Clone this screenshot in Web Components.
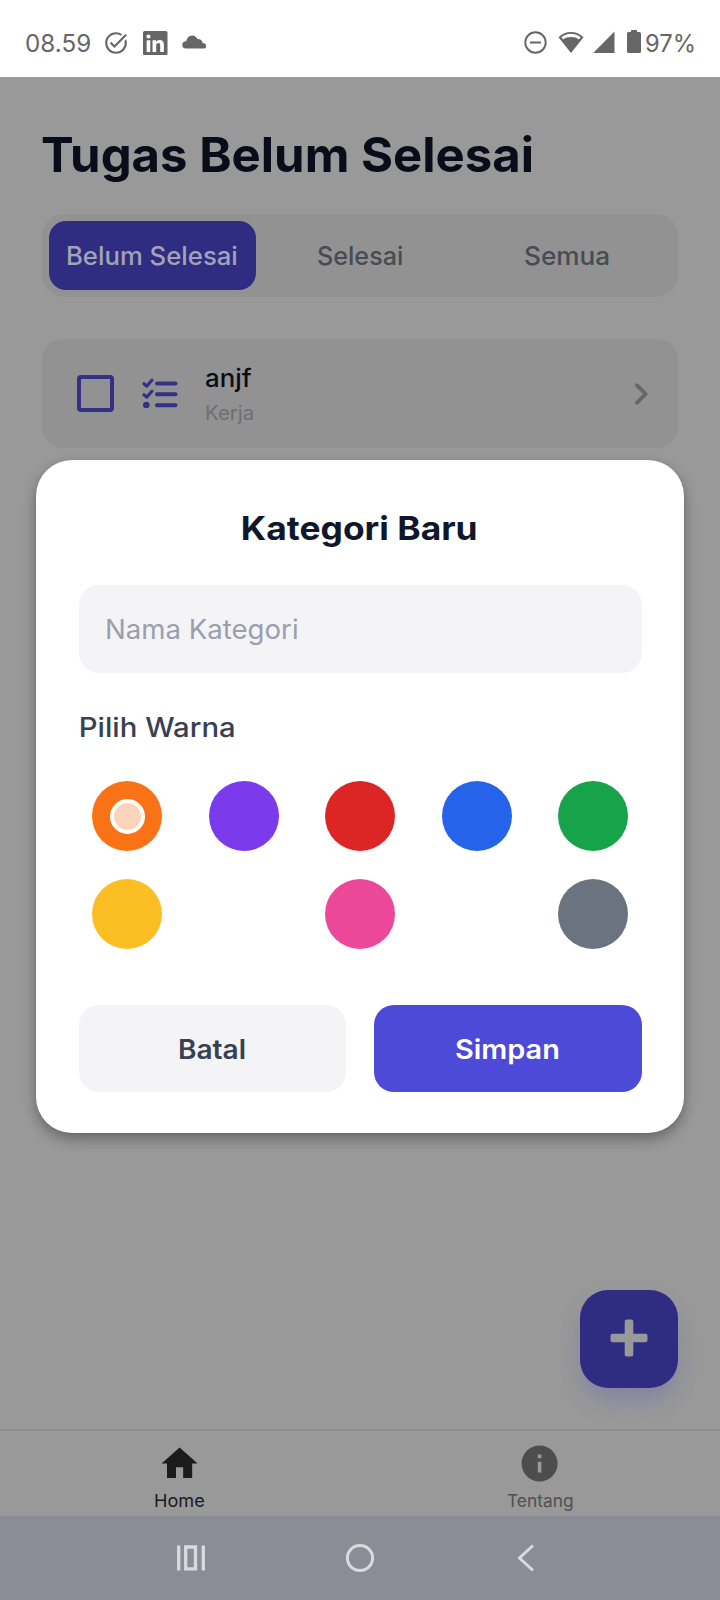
<!DOCTYPE html>
<html lang="id">
<head>
<meta charset="utf-8">
<title>Tugas Belum Selesai</title>
<style>
body{margin:0;background:#999;font-family:Inter,"Liberation Sans",sans-serif;overflow:hidden}
</style>
</head>
<body>
<todo-app></todo-app>
<script>
const define=(name,html,base=HTMLElement)=>{
  const t=document.createElement('template');t.innerHTML=html;
  customElements.define(name,class extends base{
    constructor(){super();this.attachShadow({mode:'open'}).appendChild(t.content.cloneNode(true));}
  });
};

/* One line of text whose glyphs span exactly the width given by "w". */
customElements.define('fit-text',class extends HTMLElement{
  connectedCallback(){
    if(this.shadowRoot)return;
    const size=this.getAttribute('size'),weight=this.getAttribute('weight')||400,w=+this.getAttribute('w');
    const c=document.createElement('canvas').getContext('2d');
    c.font=`${weight} ${size}px Inter, "Liberation Sans", sans-serif`;
    const m=c.measureText(this.textContent.trim());
    const ink=m.actualBoundingBoxRight+m.actualBoundingBoxLeft;
    this.attachShadow({mode:'open'}).innerHTML=`<style>
      :host{display:block;flex:none;width:${w}px;height:${size*1.2}px;line-height:${size*1.2}px;font-size:${size}px;font-weight:${weight};white-space:nowrap}
      span{display:inline-block;transform-origin:0 50%;transform:scaleX(${w/ink}) translateX(${m.actualBoundingBoxLeft}px)}
    </style><span><slot></slot></span>`;
  }
});

define('status-bar',`<style>
:host{display:flex;box-sizing:border-box;height:77px;background:#fff;color:#666;padding:9px 26px 0;align-items:center;justify-content:space-between}
div{display:flex;align-items:center}
svg{display:block;fill:#666;flex:none}
fit-text{margin-top:2px}
</style>
<div>
<fit-text size="24.5" w="64">08.59</fit-text>
<svg style="margin-left:13px" width="26" height="26" viewBox="0 0 24 24"><path d="M22 5.18 10.59 16.6l-4.24-4.24 1.41-1.41 2.83 2.83 10-10L22 5.18zM19.79 10.22c.13.57.21 1.17.21 1.78 0 4.42-3.58 8-8 8s-8-3.58-8-8 3.58-8 8-8c1.58 0 3.04.46 4.28 1.25l1.44-1.44C16.1 2.67 14.13 2 12 2 6.48 2 2 6.48 2 12s4.48 10 10 10 10-4.48 10-10c0-1.19-.22-2.33-.6-3.39l-1.61 1.61z"/></svg>
<svg style="margin-left:14px" width="24.5" height="24.5" viewBox="0 0 24 24"><path d="M20.45 20.45h-3.56v-5.57c0-1.33-.02-3.04-1.85-3.04-1.85 0-2.14 1.45-2.14 2.94v5.67H9.35V9h3.41v1.56h.05c.48-.9 1.64-1.85 3.37-1.85 3.6 0 4.27 2.37 4.27 5.46v6.28zM5.34 7.43a2.06 2.06 0 1 1 0-4.12 2.06 2.06 0 0 1 0 4.12zm1.78 13.02H3.56V9h3.56v11.45zM22.22 0H1.77C.79 0 0 .77 0 1.73v20.54C0 23.23.79 24 1.77 24h20.45c.98 0 1.78-.77 1.78-1.73V1.73C24 .77 23.2 0 22.22 0z"/></svg>
<svg style="margin:-1px 0 0 14px" width="24.5" height="14" viewBox="0 0 24 14"><path d="M3.800 13.500Q0 13.200 0 9.900C0 7.500 1.700 6.300 3.900 6.200 4.800 2.700 6.800.4 9.800.4c2.700 0 4.600 1.600 5.400 3.700 2.900-.1 4.700 1.500 5.200 3.900C22.700 8.200 24 9.400 24 11c0 1.600-1 2.500-2.600 2.500z"/></svg>
</div>
<div>
<svg width="23" height="23" viewBox="0 0 23 23"><circle cx="11.500" cy="11.500" r="10.200" fill="none" stroke="#666" stroke-width="1.900"/><path d="M6 10.500h11v2H6z"/></svg>
<svg style="margin-left:11px" width="26" height="23" viewBox="0 0 26 23"><path d="M13 22 0.500 6.200C4 2.700 8.300.900 13 .900S22 2.700 25.500 6.200zM13 2.700C9.500 2.700 6 3.900 3.400 6.200l1.700 2.200C7.400 6.600 10 5.900 13 5.900s5.600.700 7.900 2.500l1.700-2.200C20 3.900 16.500 2.700 13 2.700z" fill-rule="evenodd"/></svg>
<svg style="margin-left:8.500px" width="22" height="23" viewBox="0 0 22 23"><path d="M.200 22 21.500.500V22z"/></svg>
<svg style="margin-left:12.500px;margin-top:-1px" width="14" height="24" viewBox="0 0 14 24"><path d="M4 0h6v2h2.500Q14 2 14 3.500v18Q14 23 12.500 23h-11Q0 23 0 21.500v-18Q0 2 1.500 2H4z"/></svg>
<fit-text style="margin-left:5px" size="24.5" w="48">97%</fit-text>
</div>`);

define('filter-tab',`<style>
:host{display:flex;align-items:center;justify-content:center;border-radius:17px;color:#484b52}
:host([active]){background:#2e2d82;color:#a3a2b6}
</style><slot></slot>`);

define('filter-tabs',`<style>
:host{display:grid;grid-template-columns:207px 207px 208px;box-sizing:border-box;height:83px;padding:7px;border-radius:22px;background:#929292}
</style><slot></slot>`);

define('task-card',`<style>
:host{display:flex;align-items:center;box-sizing:border-box;height:109px;margin-top:42px;padding:0 30px 0 35px;border-radius:21px;background:#929292}
svg{display:block;flex:none}
.box{box-sizing:border-box;width:37px;height:37px;border:4px solid #343087;border-radius:4px}
.list{margin:-2px 0 0 28px}
.copy{margin-left:28px;flex:1}
</style>
<div class="box"></div>
<svg class="list" width="36" height="30" viewBox="0 0 36 30" fill="none" stroke="#343087" stroke-linecap="round" stroke-linejoin="round"><path d="m2 5.700 2.700 2.400L9.900 2.200M2 16.700l2.700 2.400L9.900 13.200" stroke-width="3.200"/><path d="M15 5.500h18.500M15 16.300h18.500M15 27.200h18.500" stroke-width="4"/><circle cx="4.300" cy="27" r="3.300" fill="#343087" stroke="none"/></svg>
<div class="copy"><slot></slot></div>
<svg width="13" height="22" viewBox="0 0 13 22" fill="none" stroke="#65676c" stroke-width="3.800" stroke-linecap="round" stroke-linejoin="round"><path d="m2 2.300 8.700 8.700L2 19.700"/></svg>`);

define('add-button',`<style>
:host{position:absolute;right:42px;bottom:41px;width:98px;height:98px;border-radius:28px;background:#2e2d82;box-shadow:0 14px 22px -2px rgba(79,70,190,.26);display:flex;align-items:center;justify-content:center}
svg{display:block;margin:-2px 1px 0 0}
</style><svg width="38" height="38" viewBox="0 0 38 38"><path d="M16.800.500h4.400q2.100 0 2.100 2.100v12.100h12.100q2.100 0 2.100 2.100v4.400q0 2.100-2.100 2.100H23.300v12.100q0 2.100-2.100 2.100h-4.400q-2.100 0-2.100-2.100V23.300H2.600Q.500 23.300.500 21.200v-4.400q0-2.100 2.100-2.100h12.100V2.600q0-2.100 2.100-2.100z" fill="#999"/></svg>`);

define('bottom-nav',`<style>
:host{display:grid;grid-template-columns:1fr 1fr;box-sizing:border-box;height:87px;border-top:2px solid #8e8e8e}
div{display:flex;flex-direction:column;align-items:center;color:#1b1b1b}
div+div{color:#505050}
svg{display:block;margin:10.500px 0 5.700px}
fit-text{margin-right:1px}
</style>
<div><svg width="43.200" height="43.200" viewBox="0 0 24 24" fill="#1b1b1b"><path d="M10 20v-6h4v6h5v-8h3L12 3 2 12h3v8z"/></svg><fit-text size="17.500" w="49.500">Home</fit-text></div>
<div><svg width="43.200" height="43.200" viewBox="0 0 24 24" fill="#4d4d4d"><path d="M12 2C6.480 2 2 6.480 2 12s4.480 10 10 10 10-4.480 10-10S17.520 2 12 2zm1 15h-2v-6h2v6zm0-8h-2V7h2v2z"/></svg><fit-text size="17.500" w="66">Tentang</fit-text></div>`);

define('system-nav',`<style>
:host{display:flex;height:84px;background:#8b8d96;align-items:center;justify-content:space-between;padding:0 185px 0 176px}
svg{display:block;fill:none;stroke:#d9dae0;stroke-width:3}
</style>
<svg width="30" height="28" viewBox="0 0 30 28"><path d="M2.700 1.500v25M27.300 1.500v25M9.700 3h9.800v21.800H9.700z" stroke-width="3.300"/></svg>
<svg width="30" height="30" viewBox="0 0 30 30" style="margin-right:4px"><circle cx="15" cy="15" r="12.600"/></svg>
<svg width="18" height="28" viewBox="0 0 18 28"><path d="M16 1.500 2.500 14 16 26.500" stroke-width="3"/></svg>`);

define('text-field',`<style>
:host{display:flex;align-items:center;box-sizing:border-box;height:88px;margin-top:37px;padding:2px 28.500px 0;border-radius:20px;background:#f4f4f7;color:#9a9eae}
</style><slot></slot>`);

customElements.define('color-dot',class extends HTMLElement{
  connectedCallback(){
    if(this.shadowRoot)return;
    this.attachShadow({mode:'open'}).innerHTML=`<style>
    :host{display:flex;align-items:center;justify-content:center;width:70px;height:70px;border-radius:50%;background:${this.getAttribute('color')}}
    i{display:none;box-sizing:border-box;width:35px;height:35px;margin:1px 0 0 1px;border:4px solid #fff;border-radius:50%;background:#fcd4bb}
    :host([selected]) i{display:block}
    </style><i></i>`;
  }
});

define('color-picker',`<style>
:host{display:grid;grid-template-columns:repeat(5,70px);justify-content:space-between;row-gap:28px;margin:38.500px 13.500px 0}
::slotted(:nth-child(7)){grid-column:3}
::slotted(:nth-child(8)){grid-column:5}
</style><slot></slot>`);
customElements.get('color-picker').prototype.connectedCallback=function(){};

define('modal-button',`<style>
:host{display:flex;flex:1;box-sizing:border-box;height:87px;padding:2px 1px 0 0;align-items:center;justify-content:center;border-radius:20px;background:#f4f4f7;color:#374151}
:host([primary]){background:#4d4ad7;color:#fff}
</style><slot></slot>`);

define('category-modal',`<style>
:host{position:absolute;left:36px;right:36px;top:460px;height:673px;box-sizing:border-box;padding:48px 42.500px 0;border-radius:36px;background:#fff;box-shadow:0 6px 14px rgba(0,0,0,.32),0 0 2px rgba(0,0,0,.1)}
header{display:flex;box-sizing:border-box;height:40px;padding:2px 1px 0 0;align-items:center;justify-content:center;color:#0f172a}
.label{display:flex;align-items:center;height:30px;margin:39.500px 0 0 2px;color:#374151}
footer{display:flex;gap:28.500px;margin-top:56px}
</style>
<header><fit-text size="33" weight="700" w="233">Kategori Baru</fit-text></header>
<text-field><fit-text size="27" w="190">Nama Kategori</fit-text></text-field>
<div class="label"><fit-text size="26.500" weight="500" w="153.500">Pilih Warna</fit-text></div>
<color-picker>
<color-dot color="#f97316" selected></color-dot><color-dot color="#7c3aed"></color-dot><color-dot color="#dc2626"></color-dot><color-dot color="#2563eb"></color-dot><color-dot color="#16a34a"></color-dot>
<color-dot color="#fbbf24"></color-dot><color-dot color="#ec4899"></color-dot><color-dot color="#6b7280"></color-dot>
</color-picker>
<footer><modal-button><fit-text size="26.500" weight="600" w="66">Batal</fit-text></modal-button><modal-button primary><fit-text size="26.500" weight="600" w="102.500">Simpan</fit-text></modal-button></footer>`);

define('todo-app',`<style>
:host{display:flex;flex-direction:column;position:relative;width:720px;height:1600px;background:#999;overflow:hidden}
main{position:relative;flex:1;padding:0 42px}
.title{display:flex;height:137px;align-items:center;padding-top:18px;box-sizing:border-box;color:#090d19}
.name{color:#090d19}
.sub{color:#6b6f76;margin-top:8px}
</style>
<status-bar></status-bar>
<main>
<div class="title"><fit-text size="48" weight="700" w="490">Tugas Belum Selesai</fit-text></div>
<filter-tabs>
<filter-tab active><fit-text size="25" weight="500" w="168.500">Belum Selesai</fit-text></filter-tab>
<filter-tab><fit-text size="25" weight="500" w="84">Selesai</fit-text></filter-tab>
<filter-tab><fit-text size="25" weight="500" w="84">Semua</fit-text></filter-tab>
</filter-tabs>
<task-card><fit-text class="name" size="25" weight="500" w="46">anjf</fit-text><fit-text class="sub" size="20" w="47">Kerja</fit-text></task-card>
<add-button></add-button>
</main>
<bottom-nav></bottom-nav>
<system-nav></system-nav>
<category-modal></category-modal>`);
</script>
</body>
</html>
